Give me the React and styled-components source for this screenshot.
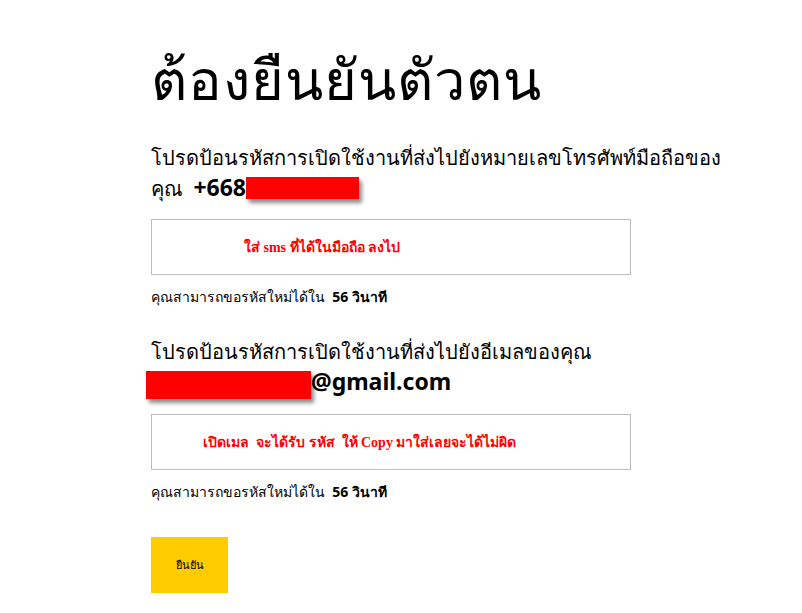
import React from 'react'
import styled, { createGlobalStyle } from 'styled-components'

const GlobalStyle = createGlobalStyle`
    html, body {
        margin: 0;
        padding: 0;
        background: #fff;
    }
    body {
        font-family: Tahoma, "Noto Sans", "DejaVu Sans", sans-serif;
        color: #000;
    }
`

const App = () => {
    return (
        <Page>
            <GlobalStyle />
            <Title>ต้องยืนยันตัวตน</Title>

            <Prompt>
                โปรดป้อนรหัสการเปิดใช้งานที่ส่งไปยังหมายเลขโทรศัพท์มือถือของ
                <br />
                คุณ&nbsp; <Strong>+668</Strong>
                <Redact $width={113} $height={22} $lift={3} />
            </Prompt>
            <CodeBox $indent={92}>ใส่ sms ที่ได้ในมือถือ ลงไป</CodeBox>
            <Hint>
                คุณสามารถขอรหัสใหม่ได้ใน&nbsp;&nbsp;<b>56 วินาที</b>
            </Hint>

            <Prompt $top={30}>
                โปรดป้อนรหัสการเปิดใช้งานที่ส่งไปยังอีเมลของคุณ
                <br />
                <Redact $width={165} $height={28} $shift={-5} />
                <Strong>@gmail.com</Strong>
            </Prompt>
            <CodeBox $indent={51}>เปิดเมล&nbsp; จะได้รับ รหัส&nbsp; ให้ Copy มาใส่เลยจะได้ไม่ผิด</CodeBox>
            <Hint>
                คุณสามารถขอรหัสใหม่ได้ใน&nbsp;&nbsp;<b>56 วินาที</b>
            </Hint>

            <ConfirmButton>ยืนยัน</ConfirmButton>
        </Page>
    )
}

//Styled Components

const Page = styled.div`
    width: 480px;
    padding: 40px 0 20px 151px;
`

const Title = styled.h1`
    margin: 0;
    font-size: 56px;
    font-weight: 400;
    line-height: 76px;
    letter-spacing: 1px;
    white-space: nowrap;
`

const Prompt = styled.p`
    margin: ${p => p.$top || 26}px 0 0;
    width: 600px;
    font-size: 20px;
    line-height: 31px;
    white-space: nowrap;
`

const Strong = styled.span`
    font-weight: 700;
    font-size: 23px;
    line-height: 20px;
`

const Redact = styled.span`
    display: inline-block;
    vertical-align: middle;
    position: relative;
    top: -${p => p.$lift || 0}px;
    width: ${p => p.$width}px;
    height: ${p => p.$height}px;
    margin-left: ${p => p.$shift || 0}px;
    background: #ff0000;
    box-shadow: 3px 4px 4px rgba(0, 0, 0, 0.45);
`

const CodeBox = styled.div`
    margin-top: 15px;
    box-sizing: border-box;
    height: 56px;
    border: 1px solid #bdbdbd;
    display: flex;
    align-items: center;
    padding-left: ${p => p.$indent}px;
    color: #ff0000;
    font-family: "Liberation Serif", Tahoma, serif;
    font-weight: 700;
    font-size: 14px;
`

const Hint = styled.div`
    margin-top: 13px;
    font-size: 14px;
    line-height: 18px;
`

const ConfirmButton = styled.button`
    display: block;
    margin-top: 36px;
    width: 77px;
    height: 56px;
    border: none;
    background: #ffcc00;
    font-family: Tahoma, "Noto Sans", sans-serif;
    font-size: 11px;
    color: #000;
    cursor: pointer;
`

export default App
